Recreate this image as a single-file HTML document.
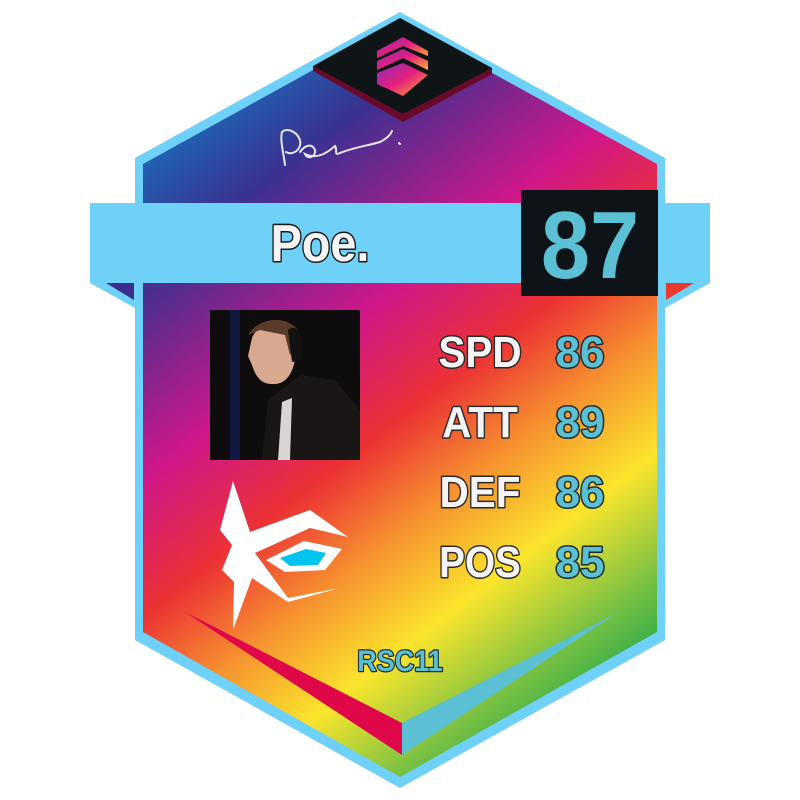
<!DOCTYPE html>
<html><head><meta charset="utf-8"><style>
html,body{margin:0;padding:0;background:#fff;width:800px;height:800px;overflow:hidden}
svg text{font-family:"Liberation Sans",sans-serif;font-weight:bold;paint-order:stroke;stroke-linejoin:round}
</style></head><body>
<svg width="800" height="800" viewBox="0 0 800 800" xmlns="http://www.w3.org/2000/svg">
<defs>
<linearGradient id="g" gradientUnits="userSpaceOnUse" x1="170" y1="90" x2="640" y2="700">
<stop offset="0" stop-color="#1479c4"/>
<stop offset="0.17" stop-color="#3a3190"/>
<stop offset="0.38" stop-color="#cf178a"/>
<stop offset="0.52" stop-color="#ec3134"/>
<stop offset="0.64" stop-color="#f6932f"/>
<stop offset="0.76" stop-color="#fbe52c"/>
<stop offset="0.88" stop-color="#7dc242"/>
<stop offset="1" stop-color="#0ba04d"/>
</linearGradient>
<linearGradient id="lg" x1="0" y1="0" x2="1" y2="1">
<stop offset="0" stop-color="#8a2bb8"/><stop offset="0.5" stop-color="#e5207e"/><stop offset="1" stop-color="#fbb42a"/>
</linearGradient>
</defs>
<polygon points="400,12 665,158 665,640 400,788 135,640 135,158" fill="#6fd0f8"/>
<polygon points="400,22 657,164 657,632 400,777 143,632 143,164" fill="url(#g)"/>
<polygon points="313,66 403,112 492,68 492,74 403,122 313,71" fill="#6a0a2a"/>
<polygon points="400,18 492,68 403,114 313,66" fill="#0f1417"/>
<g fill="url(#lg)">
<polygon points="377,51 403,37 428,51 428,56 403,46 377,58"/>
<polygon points="377,61 403,49 428,61 428,70 403,58 377,70"/>
<polygon points="377,73 403,63 428,75 403,96 377,84"/>
</g>
<path d="M285,165 C283,150 280,140 282,132 C286,128 296,130 300,140 C302,150 292,156 286,152 M300,152 C305,145 312,143 315,150 C316,157 308,160 305,154 C318,160 328,152 335,146 C338,150 333,156 340,153 C352,148 366,146 380,142 C384,140 390,136 392,131 M399,143 l1,1" fill="none" stroke="#e8e8f0" stroke-width="2" stroke-linecap="round"/>
<polygon points="90,283 135,283 135,308" fill="#6fd0f8"/>
<polygon points="106,283 134,283 134,300" fill="#3a2d8e"/>
<polygon points="665,283 710,283 665,308" fill="#6fd0f8"/>
<polygon points="666,283 694,283 666,300" fill="#e83a2e"/>
<rect x="90" y="203" width="620" height="80" fill="#6fd0f8"/>
<text x="320" y="261" font-size="52" text-anchor="middle" fill="#f4f4f4" stroke="#1a1a1a" stroke-width="3" transform="translate(320 0) scale(0.9 1) translate(-320 0)">Poe.</text>
<rect x="521" y="190" width="137" height="106" fill="#0d1317"/>
<text x="590" y="278" font-size="96" text-anchor="middle" fill="#5bc0d4" stroke="#0d1317" stroke-width="3" transform="translate(590 0) scale(0.92 1) translate(-590 0)">87</text>
<rect x="210" y="310" width="150" height="150" fill="#0e0c0c"/>
<rect x="230" y="310" width="10" height="150" fill="#13205a" opacity="0.7"/>
<path d="M262,460 L268,400 L300,375 L335,380 L360,410 L360,460 Z" fill="#1a1615"/>
<path d="M278,460 L282,402 L292,398 L290,460Z" fill="#d8d6d4"/>
<path d="M252,338 C258,322 282,318 292,330 L295,360 C292,375 285,385 272,384 C262,384 256,378 252,365 L248,356 Z" fill="#d9a890"/>
<path d="M248,335 C258,318 285,314 298,330 L300,350 L290,355 L285,335 L260,330 Z" fill="#5a3a28"/>
<path d="M288,330 C298,322 305,338 302,360 L292,362 Z" fill="#111"/>
<g font-size="44" fill="#f4f4f4" stroke="#2a2a2a" stroke-width="3">
<text x="480" y="367" text-anchor="middle" transform="translate(480 0) scale(0.92 1) translate(-480 0)">SPD</text>
<text x="480" y="437" text-anchor="middle" transform="translate(480 0) scale(0.92 1) translate(-480 0)">ATT</text>
<text x="480" y="507" text-anchor="middle" transform="translate(480 0) scale(0.92 1) translate(-480 0)">DEF</text>
<text x="480" y="577" text-anchor="middle" transform="translate(480 0) scale(0.88 1) translate(-480 0)">POS</text>
</g>
<g font-size="44" fill="#5bc0d4" stroke="#1e2a30" stroke-width="3">
<text x="580" y="367" text-anchor="middle">86</text>
<text x="580" y="437" text-anchor="middle">89</text>
<text x="580" y="507" text-anchor="middle">86</text>
<text x="580" y="577" text-anchor="middle">85</text>
</g>
<polygon points="233,481 250,532 310,510 348,537 310,528 255,553 288,598 340,588 288,602 252,578 233,630 234,582 222,570 232,545 220,530" fill="#fff"/>
<polygon points="266,560 304,541 342,549 325,570 285,572" fill="#fff"/>
<polygon points="280,558 306,549 326,553 318,565 290,566" fill="#00c4f0"/>
<polygon points="185,612 402,723 402,755" fill="#df0649"/>
<polygon points="402,723 617,613 402,755" fill="#5bc0d4"/>
<text x="400" y="671" font-size="30" text-anchor="middle" fill="#5bc0d4" stroke="#1e2a30" stroke-width="2.5" transform="translate(400 0) scale(0.9 1) translate(-400 0)">RSC11</text>
</svg>
</body></html>
